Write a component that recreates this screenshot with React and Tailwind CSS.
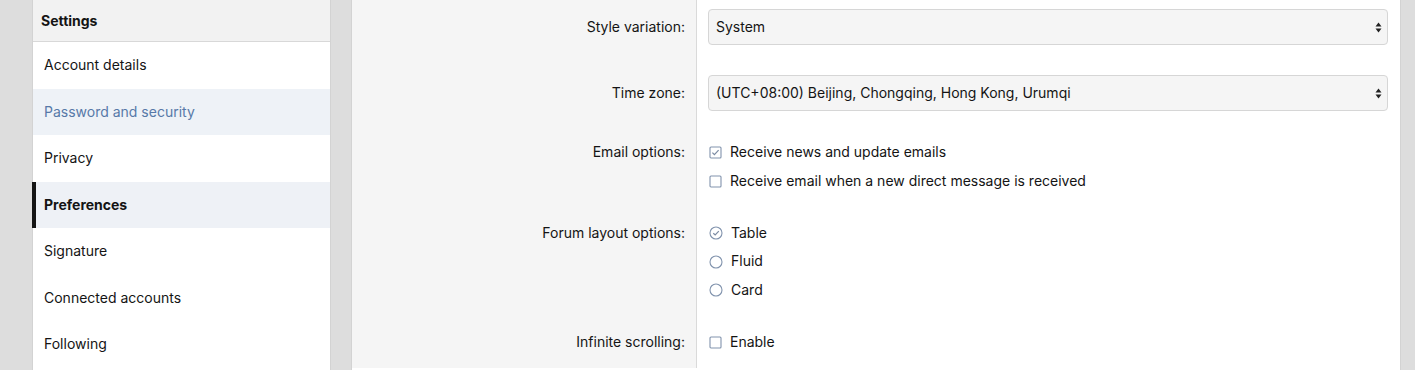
import React from 'react';

const NAV = [
  { label: 'Account details' },
  { label: 'Password and security', hover: true },
  { label: 'Privacy' },
  { label: 'Preferences', active: true },
  { label: 'Signature' },
  { label: 'Connected accounts' },
  { label: 'Following' },
];

function SelectBox({ value }) {
  return (
    <div className="flex h-[36px] w-[680px] items-center justify-between rounded-[4px] border border-[#d6d6d6] bg-[#f5f5f5] pb-[2px] pl-[7px] pr-[5px] text-[14px] text-[#141414]">
      <span>{value}</span>
      <svg width="7" height="11" viewBox="0 0 7 11" className="mt-[2px] text-[#222]">
        <path d="M3.5 0.5 L6.5 4.5 H0.5 Z" fill="currentColor" />
        <path d="M3.5 10.5 L6.5 6.5 H0.5 Z" fill="currentColor" />
      </svg>
    </div>
  );
}

function Checkbox({ checked }) {
  return (
    <svg width="13" height="13" viewBox="0 0 13 13" className="mt-[2px] shrink-0">
      <rect x="1" y="1" width="11" height="11" rx="1" fill="#fff" stroke="#8193ad" strokeWidth="1.1" />
      {checked && (
        <path d="M3.4 6.6 L5.4 8.6 L9.6 4.2" fill="none" stroke="#7b8ba3" strokeWidth="1.2" />
      )}
    </svg>
  );
}

function Radio({ checked }) {
  return (
    <svg width="14" height="14" viewBox="0 0 14 14" className="mt-[2px] shrink-0">
      <circle cx="7" cy="7" r="6" fill="#fff" stroke="#8193ad" strokeWidth="1.1" />
      {checked && (
        <path d="M4.3 7.2 L6.2 9 L9.8 5.2" fill="none" stroke="#7b8ba3" strokeWidth="1.2" />
      )}
    </svg>
  );
}

function Option({ children, control }) {
  return (
    <label className="flex h-[24px] items-center gap-[8px] pb-[2px] pl-[1px] text-[14px] text-[#141414]">
      {control}
      <span>{children}</span>
    </label>
  );
}

function Row({ label, pt, pb, labelH, children }) {
  return (
    <div className="flex">
      <div
        className={`flex w-[345px] shrink-0 justify-end border-r border-[#dadada] bg-[#f5f5f5] pr-[11px] ${pt} ${pb}`}
      >
        <div className={`flex items-center pb-[2px] text-[14px] text-[#141414] ${labelH}`}>{label}</div>
      </div>
      <div className={`flex-1 pl-[11px] pr-[11px] ${pt} ${pb}`}>{children}</div>
    </div>
  );
}

export default function App() {
  return (
    <div
      className="flex h-[370px] w-[1415px] items-start overflow-hidden bg-[#dddddd] pl-[32px]"
      style={{ fontFamily: 'Inter, "Noto Sans", sans-serif' }}
    >
      {/* Sidebar */}
      <aside className="h-[400px] w-[299px] shrink-0 border-x border-[#d3d3d3] bg-white">
        <div className="flex h-[42px] items-center border-b border-[#d8d8d8] bg-[#f2f2f2] pb-[1px] pl-[8px] text-[14px] font-bold text-[#141414]">
          Settings
        </div>
        <ul>
          {NAV.map((item) => (
            <li
              key={item.label}
              className={`flex h-[46.5px] items-center pb-[1px] text-[14px]
                ${item.active ? '-ml-[1px] border-l-[4px] border-[#141414] bg-[#eef1f6] pl-[8px] font-bold text-[#141414]' : 'pl-[11px]'}
                ${item.hover ? 'bg-[#eef2f7] text-[#5779a8]' : ''}
                ${!item.active && !item.hover ? 'text-[#141414]' : ''}`}
            >
              {item.label}
            </li>
          ))}
        </ul>
      </aside>

      {/* Main form */}
      <main className="ml-[20px] h-[400px] w-[1050px] shrink-0 border-x border-[#d3d3d3] bg-white">
        <div className="flex flex-col">
          <Row label="Style variation:" pt="pt-[9px]" pb="pb-[15px]" labelH="h-[36px]">
            <SelectBox value="System" />
          </Row>
          <Row label="Time zone:" pt="pt-[15px]" pb="pb-[15px]" labelH="h-[36px]">
            <SelectBox value="(UTC+08:00) Beijing, Chongqing, Hong Kong, Urumqi" />
          </Row>
          <Row label="Email options:" pt="pt-[14px]" pb="pb-[14px]" labelH="h-[24px]">
            <div className="flex flex-col gap-[5px]">
              <Option control={<Checkbox checked />}>Receive news and update emails</Option>
              <Option control={<Checkbox />}>Receive email when a new direct message is received</Option>
            </div>
          </Row>
          <Row label="Forum layout options:" pt="pt-[14px]" pb="pb-[14px]" labelH="h-[24px]">
            <div className="flex flex-col gap-[4.5px]">
              <Option control={<Radio checked />}>Table</Option>
              <Option control={<Radio />}>Fluid</Option>
              <Option control={<Radio />}>Card</Option>
            </div>
          </Row>
          <Row label="Infinite scrolling:" pt="pt-[14px]" pb="pb-[14px]" labelH="h-[24px]">
            <Option control={<Checkbox />}>Enable</Option>
          </Row>
        </div>
      </main>
    </div>
  );
}
